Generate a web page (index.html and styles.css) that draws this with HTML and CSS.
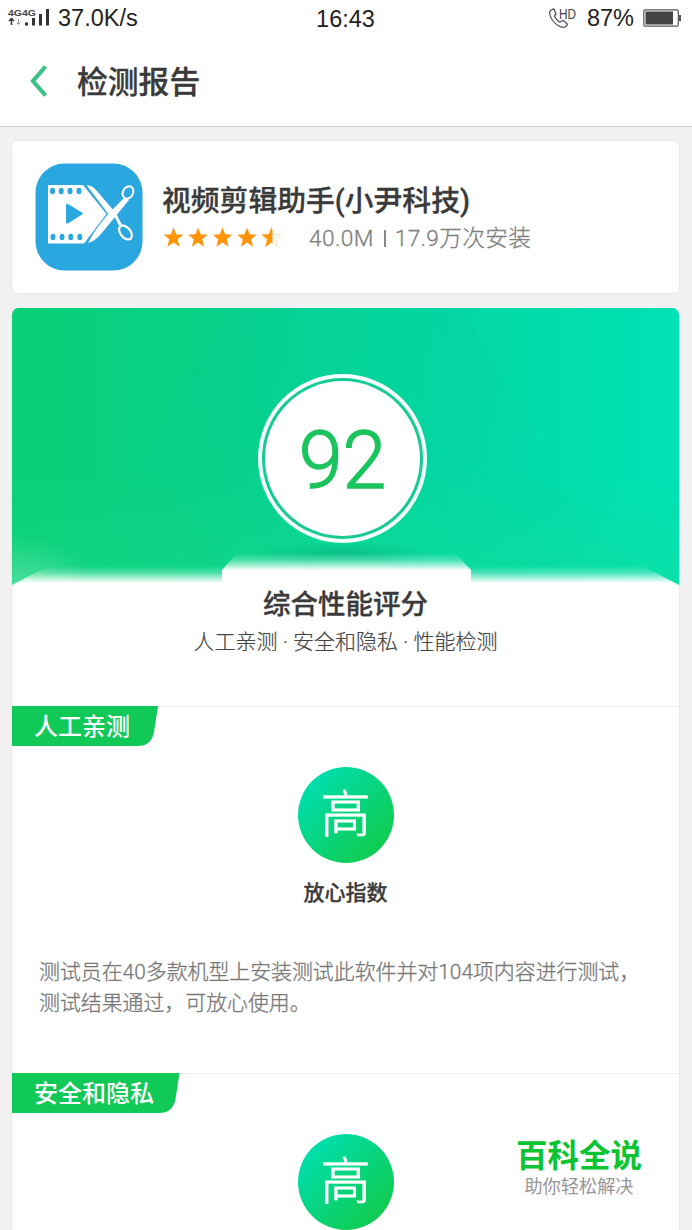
FILE: index.html
```html
<!DOCTYPE html>
<html lang="zh-CN">
<head>
    <meta charset="UTF-8">
    <meta name="viewport" content="width=device-width, initial-scale=1.0">
    <title>检测报告</title>
    <link rel="stylesheet" href="styles.css">
</head>
<body>
    <div class="status">
        <div class="signal">
            <svg width="42" height="20" viewBox="0 0 42 20">
                <text x="0" y="8" class="net" textLength="28" lengthAdjust="spacingAndGlyphs">4G4G</text>
                <path d="M3.500 17V11M1 13L3.500 10.500L6 13" fill="none" stroke="#333" stroke-width="1.500"/>
                <path d="M10.500 11V16M8.500 14.500L10.500 16.500L12.500 14.500" fill="none" stroke="#999" stroke-width="1"/>
                <path d="M17 14.500h3v3h-3zM24 10h3v7.500h-3zM31 6h3v11.500h-3zM38 1h3v16.500h-3z" fill="#333"/>
            </svg>
            <span class="speed">37.0K/s</span>
        </div>
        <div class="clock">16:43</div>
        <div class="power">
            <svg width="30" height="24" viewBox="0 0 30 24">
                <path d="M4 3.500Q1.500 4.500 1.500 7Q3 15 10 19.500Q14 22 17 21Q19 19.500 19.500 18.200L15 14.300L11.800 16.200Q8 13.500 6.300 10L8 8L6 3Z" fill="none" stroke="#555" stroke-width="1.300" stroke-linejoin="round"/>
                <text x="11" y="13" class="hd" textLength="17" lengthAdjust="spacingAndGlyphs">HD</text>
            </svg>
            <span class="percent">87%</span>
            <svg width="39" height="18" viewBox="0 0 39 18">
                <rect x=".8" y=".8" width="34.500" height="16.400" rx="1.500" fill="#fff" stroke="#555" stroke-width="1.200"/>
                <rect x="2.500" y="2.500" width="27.500" height="13" fill="#444"/>
                <path d="M36 6h2v6h-2z" fill="#555"/>
            </svg>
        </div>
    </div>

    <div class="header">
        <svg class="back" width="20" height="34" viewBox="0 0 20 34">
            <path d="M17.500 2.500L5 17L17.500 31.500" fill="none" stroke="#3cc282" stroke-width="4.200"/>
        </svg>
        <h1>检测报告</h1>
    </div>

    <div class="card app">
        <svg class="icon" width="108" height="108" viewBox="0 0 108 108">
            <rect x=".5" y=".5" width="107" height="107" rx="29" fill="#2ba7df"/>
            <path d="M13 22H48L71.500 51L49 80.500H13Z" fill="#fff"/>
            <g fill="#2ba7df">
                <ellipse cx="17.500" cy="28" rx="2.500" ry="3.200"/>
                <ellipse cx="26.200" cy="28" rx="2.500" ry="3.200"/>
                <ellipse cx="35" cy="28" rx="2.500" ry="3.200"/>
                <ellipse cx="44" cy="28" rx="2.500" ry="3.200"/>
                <ellipse cx="18" cy="74" rx="2.500" ry="3.200"/>
                <ellipse cx="27" cy="74" rx="2.500" ry="3.200"/>
                <ellipse cx="35.800" cy="74" rx="2.500" ry="3.200"/>
                <ellipse cx="44.800" cy="74" rx="2.500" ry="3.200"/>
                <path d="M31 42Q31 40 33 41L47 49.500Q48.500 50.500 47 51.500L33 60.500Q31 61 31 59Z"/>
            </g>
            <path d="M51.500 22Q57 22 62 28L79 48L74.500 52L72.500 50Z" fill="#fff"/>
            <path d="M53 80Q60 78 66 71L94 37L89 35L74 50Q60 66 53 80Z" fill="#fff"/>
            <path d="M79 49Q82 56 86 63" fill="none" stroke="#fff" stroke-width="3"/>
            <ellipse cx="93" cy="29.500" rx="5" ry="6.500" transform="rotate(30 93 29.500)" fill="#2ba7df" stroke="#fff" stroke-width="2"/>
            <ellipse cx="90.500" cy="69.500" rx="5" ry="8" transform="rotate(-40 90.500 69.500)" fill="#2ba7df" stroke="#fff" stroke-width="2.200"/>
        </svg>
        <div class="info">
            <h2>视频剪辑助手(小尹科技)</h2>
            <div class="meta">
                <svg width="120" height="22" viewBox="0 0 120 22">
                    <defs>
                        <path id="star" d="M11.500 .5L14.100 7.300L21.300 7.700L15.700 12.300L17.600 19.700L11.500 15.500L5.400 19.700L7.300 12.300L1.700 7.700L8.900 7.300Z"/>
                        <clipPath id="half"><path d="M0 0h12.500v22H0z"/></clipPath>
                    </defs>
                    <g fill="#ff9408">
                        <use href="#star"/>
                        <use href="#star" x="24.500"/>
                        <use href="#star" x="49"/>
                        <use href="#star" x="73.500"/>
                        <g transform="translate(98 0)">
                            <use href="#star" fill="#fff" stroke="#ffd9a3" stroke-width=".8"/>
                            <use href="#star" clip-path="url(#half)"/>
                        </g>
                    </g>
                </svg>
                <span class="size">40.0M</span>
                <i class="bar"></i>
                <span class="count">17.9万次安装</span>
            </div>
        </div>
    </div>

    <div class="card report">
        <div class="hero">
            <svg class="bg" width="667" height="277" viewBox="0 0 667 277">
                <defs>
                    <linearGradient id="green" x1="0" y1="0" x2="1" y2="0">
                        <stop offset="0" stop-color="#0bd077"/>
                        <stop offset=".3" stop-color="#08d188"/>
                        <stop offset=".65" stop-color="#04d8a4"/>
                        <stop offset="1" stop-color="#00e1b5"/>
                    </linearGradient>
                    <linearGradient id="shade" x1="0" y1="0" x2="0" y2="1">
                        <stop offset="0" stop-color="#00c89a" stop-opacity=".2"/>
                        <stop offset="1" stop-color="#00c89a" stop-opacity="0"/>
                    </linearGradient>
                    <linearGradient id="light" x1="0" y1="0" x2="0" y2="1">
                        <stop offset=".6" stop-color="#20e08c" stop-opacity="0"/>
                        <stop offset="1" stop-color="#20e08c" stop-opacity=".3"/>
                    </linearGradient>
                    <linearGradient id="fade" x1="0" y1="0" x2="0" y2="1">
                        <stop offset="0" stop-color="#fff" stop-opacity="0"/>
                        <stop offset=".35" stop-color="#fff" stop-opacity=".25"/>
                        <stop offset=".9" stop-color="#fff"/>
                    </linearGradient>
                    <radialGradient id="shadow">
                        <stop offset="0" stop-color="#00a070" stop-opacity=".4"/>
                        <stop offset="1" stop-color="#00a070" stop-opacity="0"/>
                    </radialGradient>
                    <radialGradient id="corner">
                        <stop offset="0" stop-color="#fff" stop-opacity=".24"/>
                        <stop offset="1" stop-color="#fff" stop-opacity="0"/>
                    </radialGradient>
                </defs>
                <path d="M0 0H667V277H0Z" fill="url(#green)"/>
                <path d="M218 0H450L610 277H60Z" fill="url(#shade)"/>
                <path d="M0 0H667V277H0Z" fill="url(#light)"/>
                <ellipse cx="0" cy="277" rx="85" ry="50" fill="url(#corner)"/>
                <ellipse cx="330" cy="246" rx="90" ry="12" fill="url(#shadow)"/>
                <path d="M0 277L36 258H631L667 277Z" fill="url(#fade)"/>
                <path d="M210 262L225 245H443L459 262V265H210Z" fill="url(#fade)"/>
                <path d="M210 263H459V277H210Z" fill="#fff"/>
            </svg>
            <div class="score"><span>92</span></div>
        </div>
        <div class="summary">
            <h3>综合性能评分</h3>
            <p>人工亲测 · 安全和隐私 · 性能检测</p>
        </div>

        <div class="section">
            <div class="tag">
                <svg width="147" height="41" viewBox="0 0 147 41">
                    <path d="M0 0H146L142 26Q139.500 40 126 40H0Z" fill="#10c957"/>
                </svg>
                <span>人工亲测</span>
            </div>
            <div class="level">高</div>
            <h4>放心指数</h4>
            <p>测试员在40多款机型上安装测试此软件并对104项内容进行测试，<br>测试结果通过，可放心使用。</p>
        </div>

        <div class="section">
            <div class="tag">
                <svg width="168" height="41" viewBox="0 0 168 41">
                    <path d="M0 0H167.500L163.500 26Q161 40 147 40H0Z" fill="#10c957"/>
                </svg>
                <span>安全和隐私</span>
            </div>
            <div class="level">高</div>
        </div>
    </div>

    <div class="logo">
        <b>百科全说</b>
        <span>助你轻松解决</span>
    </div>
</body>
</html>
```
FILE: styles.css
```css
*{
    box-sizing: border-box;
    margin: 0;
    padding: 0;
}
body{
    height: 1230px;
    overflow: hidden;
    position: relative;
    background-color: #f1f1f1;
    color: #3a3a3a;
    font-family: Roboto, "Noto Sans CJK SC", sans-serif;
}
svg{
    display: block;
    flex: none;
}
h1,h2,h3,h4{
    font-weight: 500;
    white-space: nowrap;
    -webkit-text-stroke: 0.3px #3a3a3a;
}
.status{
    height: 36px;
    padding: 0 10px 0 8px;
    display: grid;
    grid-template-columns: 1fr auto 1fr;
    align-items: center;
    background-color: #fff;
    color: #222;
    font-family: "Liberation Sans", sans-serif;
    font-size: 23.5px;
}
.clock{
    padding: 2px 0 0 1px;
}
.signal,.power{
    display: flex;
    align-items: center;
}
.signal{
    gap: 8px;
}
.power{
    justify-content: flex-end;
    gap: 9px;
}
.net{
    font-size: 9px;
    font-weight: bold;
    fill: #444;
}
.hd{
    font-size: 14px;
    fill: #444;
}
.header{
    height: 91px;
    padding: 0 0 0 28px;
    display: flex;
    align-items: center;
    gap: 29px;
    background-color: #fff;
    border-bottom: 1px solid #cfcfcf;
}
.header h1{
    padding-bottom: 4px;
    font-size: 30.8px;
}
.card{
    width: 669px;
    margin-left: 11px;
    background-color: #fff;
    border: 1px solid #e9e9e9;
    border-radius: 7px;
}
.app{
    height: 154px;
    margin-top: 13px;
    padding: 22px 0 0 23px;
    display: flex;
    gap: 19px;
}
.info{
    padding-top: 17px;
}
.info h2{
    font-size: 28.8px;
    line-height: 42px;
}
.meta{
    height: 32px;
    display: flex;
    align-items: center;
    color: #808080;
    font-size: 22.7px;
    font-weight: 300;
    line-height: 32px;
    -webkit-text-stroke: 0.3px #808080;
}
.size{
    margin: 2px 0 0 27px;
    letter-spacing: 0.4px;
}
.count{
    margin-top: 2px;
    letter-spacing: 0.3px;
}
.bar{
    width: 2px;
    height: 17px;
    margin: 0 9px 0 10px;
    background-color: #888;
}
.report{
    height: 940px;
    margin-top: 14px;
    border-top: 0;
    overflow: hidden;
}
.hero{
    height: 277px;
    position: relative;
    padding: 66px 0 0 246px;
}
.bg{
    position: absolute;
    left: 0;
    top: 0;
}
.score{
    position: relative;
    width: 169px;
    height: 169px;
    border: 4px solid #f4fffc;
    border-radius: 50%;
    padding: 3px;
    background-color: #18cb94;
}
.score span{
    height: 100%;
    padding-top: 5px;
    display: flex;
    align-items: center;
    justify-content: center;
    border-radius: 50%;
    background-color: #fff;
    color: #1bc45c;
    font-size: 79px;
    font-weight: 300;
    -webkit-text-stroke: 1.3px #1bc45c;
}
.summary{
    height: 121px;
    padding-top: 1px;
    text-align: center;
}
.summary h3{
    font-size: 27.5px;
    line-height: 38px;
}
.summary p{
    font-size: 21px;
    font-weight: 300;
    line-height: 37px;
    color: #444;
    -webkit-text-stroke: 0.2px #444;
}
.section{
    height: 367px;
    border-top: 1px solid #ececec;
}
.tag{
    height: 61px;
    margin-top: -1px;
    position: relative;
}
.tag span{
    position: absolute;
    left: 22px;
    top: 1px;
    line-height: 40px;
    font-size: 24px;
    font-weight: 500;
    color: #fff;
}
.level{
    width: 96px;
    height: 96px;
    margin: 0 auto;
    border-radius: 50%;
    background: linear-gradient(135deg, #00dfb0 12%, #10cb50 85%);
    color: #fff;
    font-size: 50px;
    font-weight: 300;
    line-height: 97px;
    text-align: center;
    -webkit-text-stroke: 0.8px #fff;
}
.section h4{
    margin-top: 15px;
    font-size: 21px;
    line-height: 30px;
    text-align: center;
}
.section p{
    margin: 49px 0 0 27px;
    font-size: 20.9px;
    font-weight: 300;
    line-height: 31px;
    color: #777;
    white-space: nowrap;
    -webkit-text-stroke: 0.3px #777;
}
/* floats over the bottom right corner of the page */
.logo{
    position: absolute;
    left: 515px;
    top: 1136px;
    width: 128px;
    text-align: center;
    white-space: nowrap;
}
.logo b{
    display: block;
    font-size: 31.5px;
    line-height: 42px;
    color: #0cc431;
}
.logo span{
    display: block;
    margin-top: -1px;
    font-size: 18.2px;
    line-height: 20px;
    color: #969696;
}
```
